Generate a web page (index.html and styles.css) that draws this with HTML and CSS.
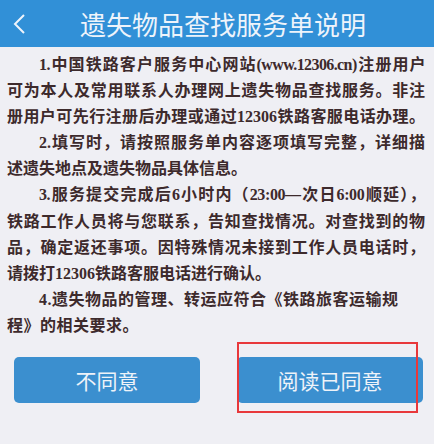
FILE: index.html
```html
<!DOCTYPE html>
<html lang="zh-CN">
<head>
    <meta charset="UTF-8">
    <meta name="viewport" content="width=device-width, initial-scale=1.0">
    <title>遗失物品查找服务单说明</title>
    <link rel="stylesheet" href="styles.css">
</head>
<body>
    <div class="header">
        <svg class="back" width="14" height="22" viewBox="0 0 14 22">
            <polyline points="11,2 2,11 11,20" fill="none" stroke="#eef4fb" stroke-width="2"/>
        </svg>
        <span class="title">遗失物品查找服务单说明</span>
    </div>

    <div class="notice">
        <p class="item">
            <span class="line full indent tight">1.中国铁路客户服务中心网站(www.12306.cn)注册用户</span>
            <span class="line full">可为本人及常用联系人办理网上遗失物品查找服务。非注</span>
            <span class="line full">册用户可先行注册后办理或通过12306铁路客服电话办理。</span>
        </p>
        <p class="item">
            <span class="line full indent">2.填写时，请按照服务单内容逐项填写完整，详细描</span>
            <span class="line">述遗失地点及遗失物品具体信息。</span>
        </p>
        <p class="item">
            <span class="line full indent tight-less">3.服务提交完成后6小时内（23:00—次日6:00顺延），</span>
            <span class="line full">铁路工作人员将与您联系，告知查找情况。对查找到的物</span>
            <span class="line full">品，确定返还事项。因特殊情况未接到工作人员电话时，</span>
            <span class="line">请拨打12306铁路客服电话进行确认。</span>
        </p>
        <p class="item">
            <span class="line indent loose">4.遗失物品的管理、转运应符合《铁路旅客运输规</span>
            <span class="line loose">程》的相关要求。</span>
        </p>
    </div>

    <div class="actions">
        <button class="btn">不同意</button>
        <button class="btn">阅读已同意</button>
        <div class="highlight"></div>
    </div>
</body>
</html>
```

FILE: styles.css
```css
html, body {
    background: #efeff4;
}
body {
    margin: 0;
    min-height: 444px;
    font-family: "Noto Sans CJK SC", sans-serif;
}
.header {
    height: 47px;
    background: #3190d7;
    display: flex;
    align-items: center;
    padding-left: 13px;
}
.back {
    display: block;
}
.title {
    margin-left: 53px;
    font-size: 26px;
    color: #eef4fb;
}
.notice {
    width: 418px;
    padding: 5px 0 0 7px;
}
.item {
    margin: 0;
    font-family: "Liberation Serif", "Noto Sans CJK SC", serif;
    font-weight: bold;
    font-size: 16px;
    line-height: 26.1px;
    color: #3d2a2c;
}
.line {
    display: block;
    height: 26.1px;
}
.indent {
    text-indent: 2em;
}
.full {
    text-align: justify;
    text-align-last: justify;
}
.tight {
    letter-spacing: -0.6px;
}
.tight-less {
    letter-spacing: -0.4px;
}
.loose {
    letter-spacing: 0.5px;
}
.actions {
    position: relative;
    display: flex;
    justify-content: space-between;
    align-items: flex-start;
    padding: 0 11px 0 14px;
    margin-top: 18px;
    height: 46px;
}
.btn {
    width: 186px;
    height: 46px;
    border: none;
    border-radius: 5px;
    background: #3b8fcf;
    color: #eef3f9;
    font-family: "Noto Sans CJK SC", sans-serif;
    font-size: 21px;
    padding: 0;
}
.highlight {
    position: absolute;
    z-index: 1;
    left: 237px;
    top: -15px;
    width: 177px;
    height: 67px;
    border: 2px solid #e8383b;
    pointer-events: none;
}
```
